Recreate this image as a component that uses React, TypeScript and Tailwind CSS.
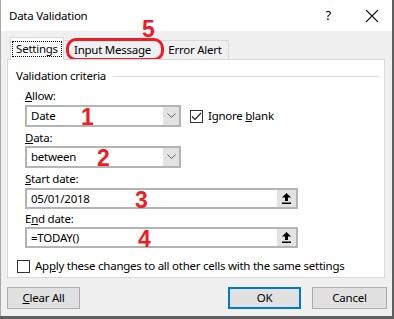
const font = { fontFamily: '"Noto Sans", "Segoe UI", sans-serif' };

function Chevron() {
  return (
    <svg width="9" height="6" viewBox="0 0 9 6" fill="none">
      <path d="M0.5 0.5 L4.5 4.5 L8.5 0.5" stroke="#606060" strokeWidth="1" />
    </svg>
  );
}

function Upload() {
  return (
    <svg width="9" height="11" viewBox="0 0 9 11">
      <path d="M4.5 0 L9 4.5 L6 4.5 L6 8 L3 8 L3 4.5 L0 4.5 Z" fill="#000" />
      <rect x="0" y="9.5" width="9" height="1.5" fill="#000" />
    </svg>
  );
}

function Check({ on }: { on?: boolean }) {
  return (
    <span className="flex h-[13px] w-[13px] shrink-0 items-center justify-center border border-[#333] bg-white">
      {on && (
        <svg width="11" height="9" viewBox="0 0 11 9" fill="none">
          <path d="M1 4.5 L4 7.5 L10 1" stroke="#222" strokeWidth="1.2" />
        </svg>
      )}
    </span>
  );
}

function Combo({ value }: { value: string }) {
  return (
    <div className="flex h-[22px] w-[156px] border-2 border-[#b4b4b4] bg-white">
      <div className="flex flex-1 items-center pl-[4px]">{value}</div>
      <div className="flex w-[16px] items-center justify-center bg-[#e3e3e3]">
        <Chevron />
      </div>
    </div>
  );
}

function RefBox({ value }: { value: string }) {
  return (
    <div className="flex h-[21px] w-[273px] border-2 border-[#b4b4b4] bg-white">
      <div className="flex flex-1 items-center pl-[4px]">{value}</div>
      <div className="flex w-[19px] items-center justify-center bg-[#e3e3e3]">
        <Upload />
      </div>
    </div>
  );
}

function Num({ n, className }: { n: string; className: string }) {
  return (
    <span
      className={`absolute text-[23px] font-bold leading-none tracking-normal text-[#ee1c25] ${className}`}
      style={{ fontFamily: '"Liberation Sans", Arial, sans-serif' }}
    >
      {n}
    </span>
  );
}

export default function App() {
  return (
    <div
      className="relative h-[319px] w-[394px] overflow-hidden bg-[#5f5f5f] text-[11.5px] tracking-[-0.25px] text-black"
      style={font}
    >
      <div className="flex h-[316px] w-[392px] flex-col border-l border-[#a8a8a8] bg-[#f0f0f0]">
        {/* title bar */}
        <div className="flex h-[31px] items-center bg-white pl-[8px]">
          <span>Data Validation</span>
          <span className="ml-auto mr-[34px] text-[13px]">?</span>
          <svg className="mr-[13px]" width="14" height="14" viewBox="0 0 14 14">
            <path d="M1 1 L13 13 M13 1 L1 13" stroke="#111" strokeWidth="1.1" />
          </svg>
        </div>

        <div className="relative px-[6px]">
          {/* tabs */}
          <div className="flex h-[28px] items-end pl-[3px]">
            <div className="relative z-10 -mb-px flex h-[23px] w-[54px] items-center justify-center border border-b-0 border-[#d9d9d9] bg-white">
              <span className="border border-dotted border-black px-[3px] leading-[14px]">Settings</span>
            </div>
            <div className="flex h-[19px] w-[98px] items-center justify-center border border-b-0 border-l-0 border-[#d9d9d9]">
              Input Message
            </div>
            <div className="flex h-[19px] w-[67px] items-center justify-center border border-b-0 border-l-0 border-[#d9d9d9]">
              Error Alert
            </div>
          </div>
          <div className="absolute left-[65px] top-[7px] h-[23px] w-[98px] rounded-[10px] border-[3px] border-[#ee1c25]" />
          <Num n="5" className="left-[141px] top-[-13px]" />

          {/* panel */}
          <div className="relative h-[219px] w-[378px] border border-[#d9d9d9] bg-white">
            <div className="mt-[8px] flex items-center pl-[8px] leading-4">
              <span>Validation criteria</span>
              <div className="ml-[7px] mr-[5px] h-px flex-1 bg-[#dcdcdc]" />
            </div>

            <div className="pl-[17px]">
              <div className="mt-[4px] leading-4">
                <u>A</u>llow:
              </div>
              <div className="relative mt-px flex items-center">
                <Combo value="Date" />
                <div className="ml-[9px] flex items-center gap-[5px]">
                  <Check on />
                  <span>
                    Ignore <u>b</u>lank
                  </span>
                </div>
                <Num n="1" className="left-[56px] top-[1px]" />
              </div>

              <div className="mt-[3px] leading-4">
                <u>D</u>ata:
              </div>
              <div className="relative">
                <Combo value="between" />
                <Num n="2" className="left-[72px] top-[1px]" />
              </div>

              <div className="mt-[3px] leading-4">
                <u>S</u>tart date:
              </div>
              <div className="relative mt-px">
                <RefBox value="05/01/2018" />
                <Num n="3" className="left-[110px] top-[1px]" />
              </div>

              <div className="mt-[2px] leading-4">
                E<u>n</u>d date:
              </div>
              <div className="relative">
                <RefBox value="=TODAY()" />
                <Num n="4" className="left-[113px] top-[1px]" />
              </div>
            </div>

            <div className="mt-[10px] flex items-center gap-[5px] pl-[9px] leading-4">
              <Check />
              <span>
                Ap<u>p</u>ly these changes to all other cells with the same settings
              </span>
            </div>
          </div>

          {/* buttons */}
          <div className="mt-[9px] flex">
            <button className="h-[22px] w-[73px] border border-[#adadad] bg-[#e1e1e1]">
              <u>C</u>lear All
            </button>
            <button className="ml-auto h-[22px] w-[73px] border-2 border-[#0078d7] bg-[#e1e1e1]">OK</button>
            <button className="ml-[11px] mr-[-1px] h-[22px] w-[75px] border border-[#adadad] bg-[#e1e1e1]">
              Cancel
            </button>
          </div>
        </div>
      </div>
    </div>
  );
}
